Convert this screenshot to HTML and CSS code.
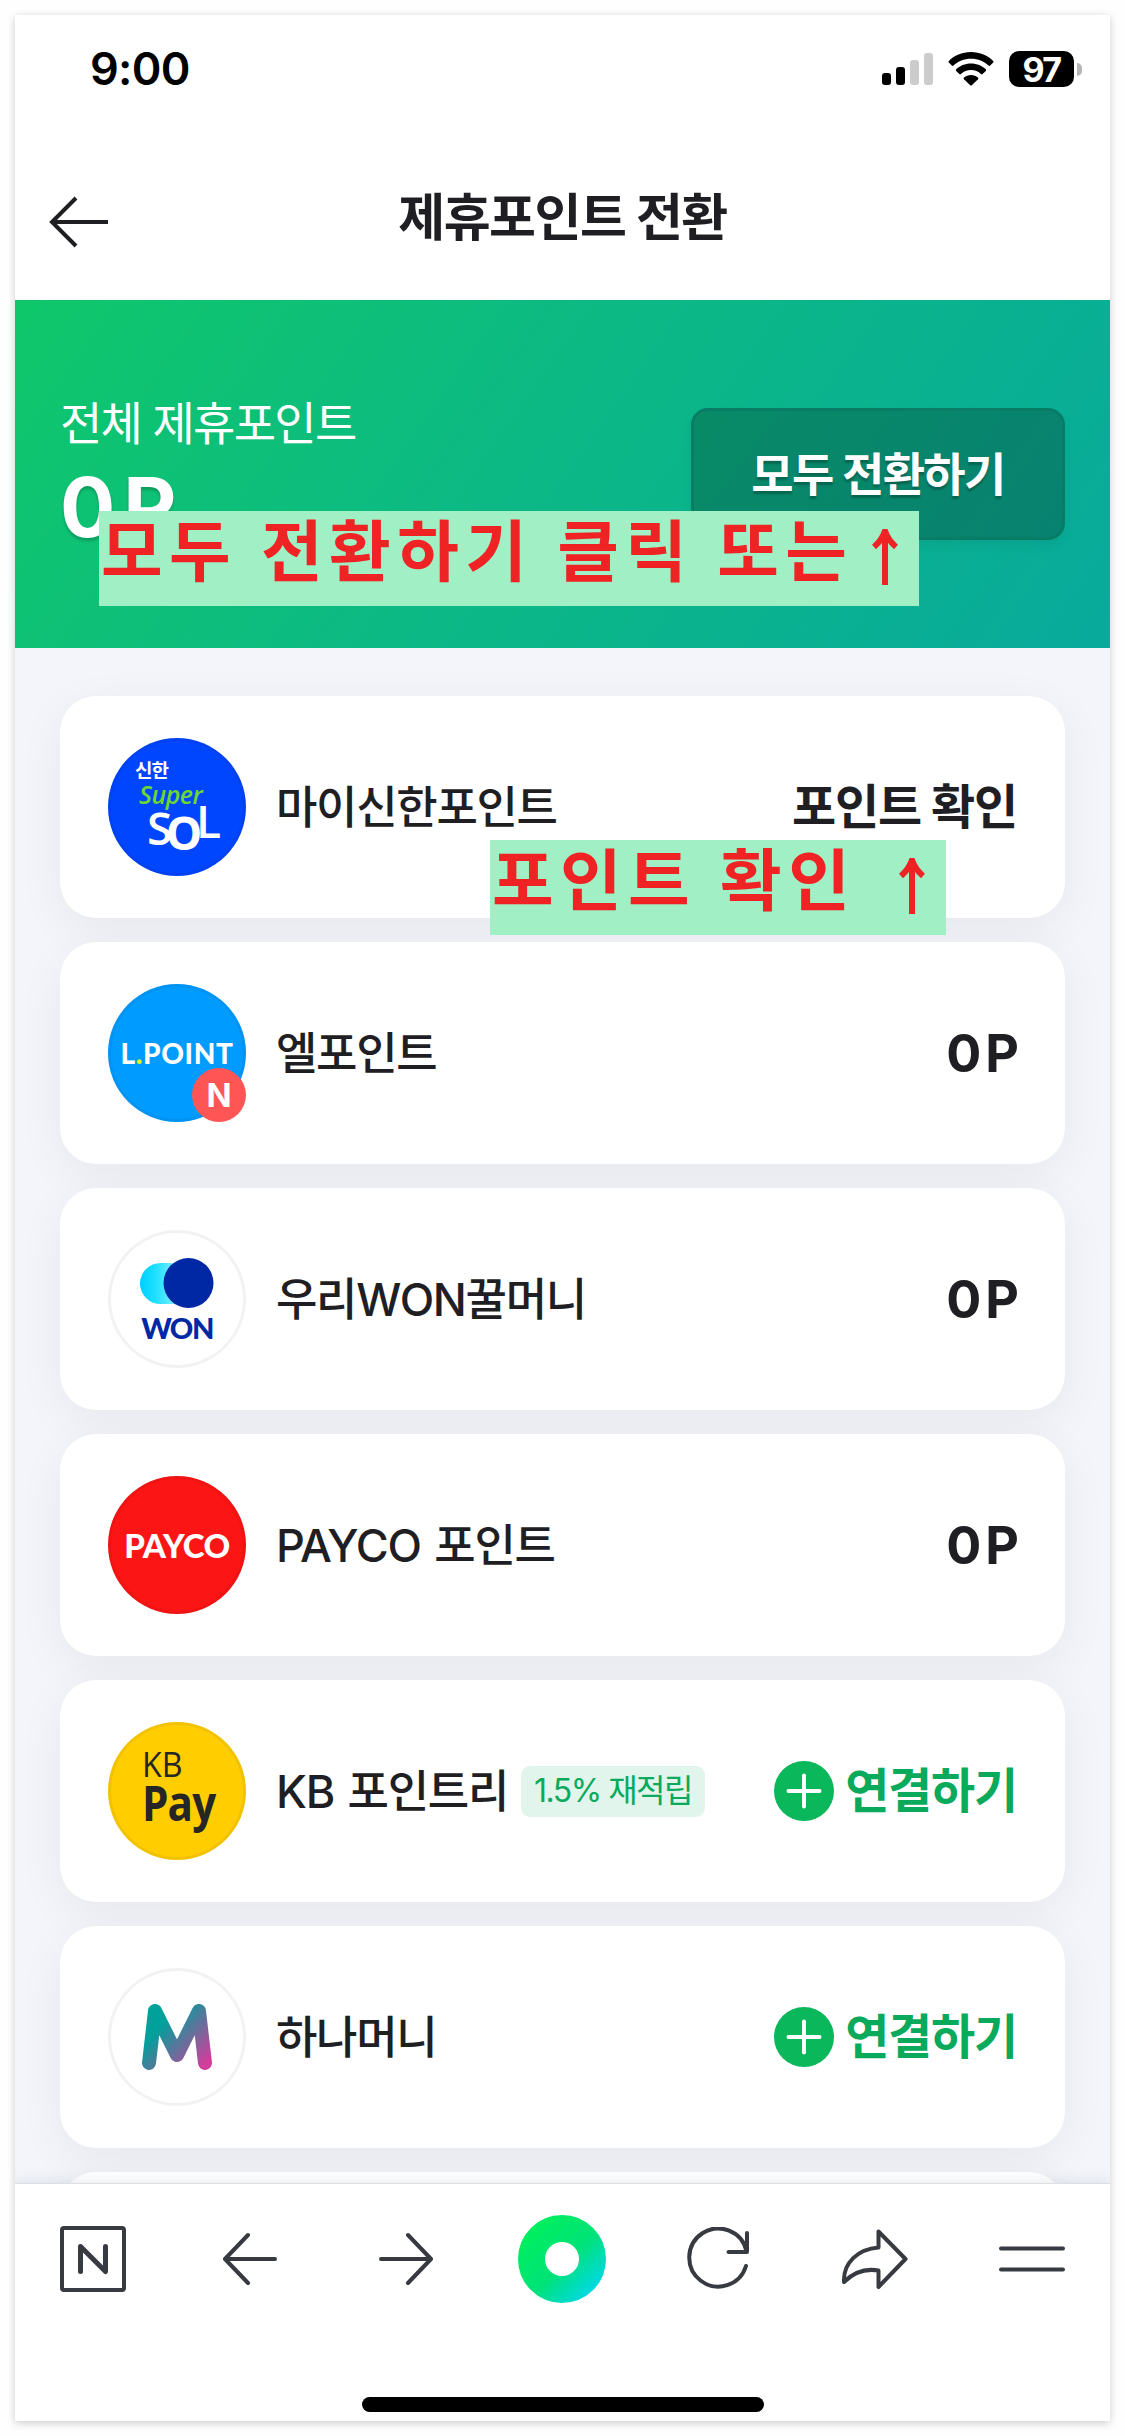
FILE: index.html
```html
<!DOCTYPE html>
<html lang="ko">
<head>
<meta charset="utf-8">
<title>제휴포인트 전환</title>
<link rel="stylesheet" href="styles.css">
</head>
<body>
<main class="phone">
  <div class="status">
    <span class="time">9:00</span>
    <div class="indicators">
      <svg width="51" height="36" viewBox="0 0 51 36"><rect x="0" y="22" width="9" height="12" rx="3"/><rect x="14" y="16" width="9" height="18" rx="3"/><rect class="dim" x="28" y="9" width="9" height="25" rx="3"/><rect class="dim" x="42" y="2" width="9" height="32" rx="3"/></svg>
      <svg class="wifi" width="46" height="36" viewBox="0 0 46 36"><path d="M23 1C14 1 6 4.500 .8 10q-.8.8 0 1.600l3 3q.8.8 1.700 0C10 10.500 16 7.800 23 7.800s13 2.700 17.500 6.800q.9.800 1.700 0l3-3q.8-.8 0-1.600C40 4.500 32 1 23 1z"/><path d="M23 12.500c-6 0-11.200 2.300-14.800 5.800q-.8.8 0 1.600l3.200 3.200q.8.700 1.600 0c2.700-2.400 6-4 10-4s7.300 1.600 10 4q.8.700 1.600 0l3.200-3.200q.8-.8 0-1.600C34.200 14.800 29 12.500 23 12.500z"/><path d="M23 24c-2.800 0-5.200 1-7 2.600q-.8.800 0 1.600l6.200 6q.8.700 1.600 0l6.200-6q.8-.8 0-1.600C28.200 25 25.800 24 23 24z"/></svg>
      <span class="battery">97</span><i class="nub"></i>
    </div>
  </div>
  <header class="top">
    <svg width="60" height="54" viewBox="0 0 60 54"><path d="M59 27H4M27 3L3 27L27 51"/></svg>
    <h1>제휴포인트 전환</h1>
  </header>
  <section class="summary">
    <div class="total"><p>전체 제휴포인트</p><strong>0P</strong></div>
    <button class="all">모두 전환하기</button>
    <div class="note note-all"><span>모두 전환하기 클릭 또는</span><svg width="26" height="56" viewBox="0 0 26 56"><path d="M13 3V56M2 18Q10 11 13 2Q16 11 24 18"/></svg></div>
  </section>
  <section class="list">
    <article class="card">
      <div class="logo shinhan"><span class="s1">신한</span><span class="s2">Super</span><span class="s3">S<b>O</b><em>L</em></span></div>
      <h2>마이신한포인트</h2><a class="check">포인트 확인</a>
      <div class="note note-check"><span>포인트 확인</span><svg width="26" height="56" viewBox="0 0 26 56"><path d="M13 3V56M2 18Q10 11 13 2Q16 11 24 18"/></svg></div>
    </article>
    <article class="card">
      <div class="logo lpoint"><span>L<i>.</i>POINT</span><b class="new">N</b></div>
      <h2>엘포인트</h2><strong class="amount">0P</strong>
    </article>
    <article class="card">
      <div class="logo won"><svg width="74" height="54" viewBox="0 0 74 54"><defs><linearGradient id="w"><stop offset="0" stop-color="#00cfff"/><stop offset=".25" stop-color="#1cdfff"/><stop offset=".65" stop-color="#8cf4ff"/></linearGradient></defs><rect y="6" width="60" height="41" rx="20.500" fill="url(#w)"/><circle cx="48.500" cy="26" r="25" fill="#0028a5"/></svg><span>WON</span></div>
      <h2>우리WON꿀머니</h2><strong class="amount">0P</strong>
    </article>
    <article class="card">
      <div class="logo payco"><span>PAYCO</span></div>
      <h2>PAYCO 포인트</h2><strong class="amount">0P</strong>
    </article>
    <article class="card">
      <div class="logo kb"><span>KB</span><b>Pay</b></div>
      <h2>KB 포인트리</h2><span class="tag">1.5% 재적립</span>
      <a class="connect"><svg width="60" height="60" viewBox="0 0 60 60"><circle cx="30" cy="30" r="30"/><path d="M14.500 30H45.500M30 14.500V45.500"/></svg><span>연결하기</span></a>
    </article>
    <article class="card">
      <div class="logo hana"><svg width="70" height="66" viewBox="0 0 70 66"><defs><linearGradient id="m" x1="0" y1="0" x2="70" y2="66" gradientUnits="userSpaceOnUse"><stop offset=".3" stop-color="#00a09b"/><stop offset=".9" stop-color="#d03d9b"/></linearGradient></defs><path d="M7 59L13 7L35 51L57 7L63 59" stroke="url(#m)"/></svg></div>
      <h2>하나머니</h2>
      <a class="connect"><svg width="60" height="60" viewBox="0 0 60 60"><circle cx="30" cy="30" r="30"/><path d="M14.500 30H45.500M30 14.500V45.500"/></svg><span>연결하기</span></a>
    </article>
    <article class="card"></article>
  </section>
  <nav class="bar">
    <div class="tools">
      <svg width="66" height="66" viewBox="0 0 66 66"><rect x="2" y="2" width="62" height="62" rx="2"/><path stroke-width="5" d="M20.500 45.500V20.500L45.500 45.500V20.500"/></svg>
      <svg width="54" height="54" viewBox="0 0 54 54"><path d="M52 27H3M25 3L2 27L25 51"/></svg>
      <svg width="54" height="54" viewBox="0 0 54 54"><path d="M2 27H51M29 3L52 27L29 51"/></svg>
      <svg width="88" height="88" viewBox="0 0 88 88"><defs><linearGradient id="g" x1="10" y1="10" x2="78" y2="78" gradientUnits="userSpaceOnUse"><stop offset="0" stop-color="#00f05c"/><stop offset=".55" stop-color="#00e278"/><stop offset="1" stop-color="#00d8ee"/></linearGradient></defs><circle cx="44" cy="44" r="30.500" fill="none" stroke="url(#g)" stroke-width="27"/></svg>
      <svg width="64" height="64" viewBox="0 0 64 64"><path d="M59 39A29 29 0 1 1 59.500 24M60 6V25H41.500"/></svg>
      <svg width="68" height="60" viewBox="0 0 68 60"><path d="M37.500 2.500L64.500 30L37.500 58V41.500C23 39 12 44 3 53C2 34 17 20 37.500 18.500Z"/></svg>
      <svg width="66" height="26" viewBox="0 0 66 26"><path d="M2 2.500H64M2 23.500H64"/></svg>
    </div>
    <i class="indicator"></i>
  </nav>
</main>
</body>
</html>
```
FILE: styles.css
```css
* { box-sizing: border-box; margin: 0; padding: 0; }
body { background: #fefefe; padding: 15px; font-family: Inter, "Noto Sans CJK KR", sans-serif; color: #1e1e23; }
i { font-style: normal; }
.phone { width: 1095px; height: 2406px; background: #fff; display: flex; flex-direction: column; box-shadow: 0 2px 8px rgba(0,0,0,.2); overflow: hidden; }
.status { height: 108px; padding: 0 28px 0 75px; display: flex; justify-content: space-between; align-items: center; color: #000; }
.time { font-size: 45px; font-weight: 600; letter-spacing: -.7px; margin-bottom: 1px; }
.indicators { display: flex; align-items: center; }
.dim { fill: #ccc; }
.wifi { margin: 0 15px; }
.battery { width: 65px; height: 36px; border-radius: 10px; background: #000; color: #fff; font-size: 34px; line-height: 37px; font-weight: 700; text-align: center; letter-spacing: -1.5px; }
.nub { width: 5px; height: 13px; margin-left: 3px; border-radius: 0 5px 5px 0; background: #b5b5b5; }
.top { height: 177px; display: grid; grid-template-columns: 60px 1fr 60px; align-items: center; padding: 0 34px; }
.top svg { margin-top: 21px; }
.top path { fill: none; stroke: #1e1e23; stroke-width: 4; }
h1 { font-size: 51px; font-weight: 700; line-height: 60px; text-align: center; letter-spacing: -1.5px; margin-top: 12px; }
.summary { position: relative; height: 348px; background: linear-gradient(125deg, #0fc76a 0%, #0cb984 45%, #08aa9c 100%); color: #fff; display: flex; justify-content: space-between; padding: 93px 45px 0; }
.total p { font-size: 46px; line-height: 60px; letter-spacing: -1.7px; }
.total strong { display: block; font-size: 82px; line-height: 90px; letter-spacing: 8px; margin-top: 10px; text-shadow: 0 3px 3px rgba(0,0,0,.2); }
.all { width: 374px; height: 132px; margin-top: 15px; border: 3px solid #087c65; border-radius: 17px; background: linear-gradient(125deg, #088a66, #088271); box-shadow: 0 6px 12px rgba(0,0,0,.06); font: 700 46px/60px Inter, "Noto Sans CJK KR", sans-serif; color: #fff; letter-spacing: -1.6px; text-shadow: 0 3px 2px rgba(0,0,0,.25); }
.note { position: absolute; z-index: 2; height: 95px; background: #a0efc5; color: #ef2224; font-size: 67px; line-height: 82px; font-weight: 700; letter-spacing: 6.4px; word-spacing: 1.7px; white-space: nowrap; display: flex; justify-content: space-between; padding: 0 21px 0 2px; }
.note svg { flex: none; margin-top: 18px; }
.note path { fill: none; stroke: #ef2224; stroke-width: 6; }
.note-all { left: 84px; top: 211px; width: 820px; }
.note-check { left: 430px; top: 144px; width: 456px; }
.list { height: 1535px; flex: none; overflow: hidden; background: #f4f5fa; padding: 48px 45px 0; display: flex; flex-direction: column; gap: 24px; }
.card { position: relative; flex: none; height: 222px; border-radius: 36px; background: #fff; box-shadow: 0 12px 48px rgba(0,0,0,.055); display: flex; align-items: center; padding: 0 48px; }
h2 { font-size: 45px; line-height: 60px; font-weight: 500; letter-spacing: -1.3px; word-spacing: 3px; margin: 2px 0 0 30px; white-space: nowrap; }
.check { margin-left: auto; margin-bottom: 9px; font-size: 48px; font-weight: 700; letter-spacing: -1.2px; }
.amount { margin-left: auto; font-size: 52px; letter-spacing: 4px; margin-right: -6px; }
.connect { margin-left: auto; display: flex; align-items: center; gap: 11px; color: #09aa5c; font-size: 48px; font-weight: 700; letter-spacing: -1.2px; }
.connect span { margin-bottom: 8px; }
.connect circle { fill: #0bb75b; }
.connect path { stroke: #fff; stroke-width: 4; stroke-linecap: round; }
.tag { height: 51px; margin-left: 13px; padding: 0 13px; border-radius: 9px; background: #e2f5ec; color: #09aa5c; font-size: 32px; line-height: 50px; letter-spacing: -1.5px; white-space: nowrap; }
.logo { position: relative; flex: none; width: 138px; height: 138px; border-radius: 50%; box-shadow: inset 0 0 0 3px rgba(0,0,0,.05); display: flex; flex-direction: column; align-items: center; justify-content: center; color: #fff; line-height: 1; }
.shinhan { background: #0046ff; align-items: flex-start; justify-content: flex-start; padding: 23px 0 0 27px; }
.s1 { font-size: 19px; line-height: 22px; font-weight: 700; letter-spacing: -1px; }
.s2 { font: italic 600 25px/22px "Open Sans", sans-serif; color: #6ed72d; margin-left: 4px; letter-spacing: -.5px; }
.s3 { font: 600 46px/46px "Open Sans", sans-serif; margin: -1px 0 0 12px; letter-spacing: -6.5px; white-space: nowrap; }
.s3 b, .s3 em { font-weight: 700; font-style: normal; line-height: 0; }
.s3 b { vertical-align: -5px; }
.s3 em { vertical-align: 7px; font-weight: 600; }
.lpoint { background: #009bff; }
.lpoint span { font: 900 28px/30px Lato, sans-serif; letter-spacing: .6px; }
.lpoint i { color: #e5f500; }
.new { position: absolute; right: 0; bottom: 0; width: 54px; height: 54px; border-radius: 50%; background: #ff5555; font-size: 33px; line-height: 54px; text-align: center; }
.won { color: #0028a5; }
.won span { font: 900 29px/26px Lato, sans-serif; margin-top: 4px; letter-spacing: -1.5px; }
.payco { background: #fc1515; }
.payco span { font: 900 33px/34px Lato, sans-serif; letter-spacing: -.5px; }
.kb { background: #ffcd00; color: #262626; align-items: flex-start; padding: 0 0 10px 34px; }
.kb span { font: 400 35px/32px "Open Sans", sans-serif; transform: scaleX(.92); transform-origin: left; }
.kb b { font: 700 49px/44px "Open Sans", sans-serif; letter-spacing: -1px; transform: scaleX(.86); transform-origin: left; }
.hana path { fill: none; stroke-width: 14; stroke-linecap: round; stroke-linejoin: round; }
.bar { position: relative; flex: 1; background: #fff; border-top: 1px solid #dcdfe4; box-shadow: 0 -2px 12px rgba(60,90,120,.12); display: flex; flex-direction: column; justify-content: space-between; padding: 31px 0 9px; }
.tools { display: grid; grid-template-columns: repeat(7, 1fr); align-items: center; justify-items: center; }
.tools svg { fill: none; stroke: #373a40; stroke-width: 4; stroke-linecap: round; stroke-linejoin: round; }
.indicator { align-self: center; width: 402px; height: 15px; border-radius: 8px; background: #000; }
```
